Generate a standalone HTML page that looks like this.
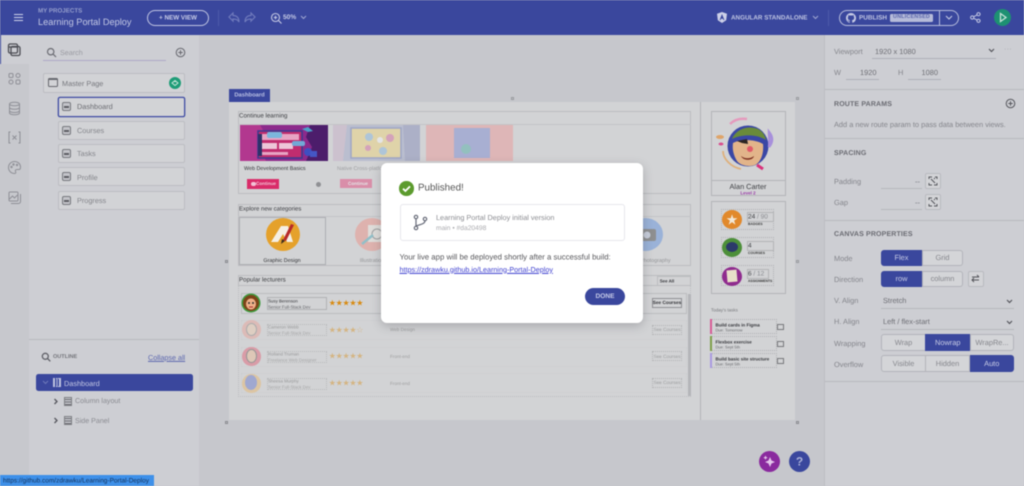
<!DOCTYPE html>
<html><head><meta charset="utf-8"><title>Learning Portal Deploy</title>
<style>
html,body{margin:0;padding:0;width:1024px;height:486px;overflow:hidden;background:#c6c7cc}
body{font-family:"Liberation Sans",sans-serif;position:relative;text-rendering:geometricPrecision}
#r{position:absolute;left:0;top:0;width:1024px;height:486px;overflow:hidden;filter:blur(.45px)}
.a{position:absolute;box-sizing:border-box}
.t{position:absolute;white-space:nowrap;line-height:1;transform:translateY(calc(-50% + .5px))}
.c{transform:translate(-50%,calc(-50% + .5px))}
.g{color:#75767c}
.h{font-weight:bold;font-size:7px;color:#6a6b72;letter-spacing:.15px}
.lb{font-size:7.400px;color:#84858b}
.ln{position:absolute;height:1px;background:#aeafb8}
.div{position:absolute;height:1px;background:#b8b9bf}
.nav{position:absolute;box-sizing:border-box;left:58px;width:127px;border:1px solid #bcbdc2;background:#d2d3d6;border-radius:2px}
.ni{position:absolute;left:62px;width:9px;height:9px;box-sizing:border-box;border:1px solid #77787e;border-radius:2px;background:#c3c4c9}
.ni:after{content:"";position:absolute;left:1px;right:1px;top:3px;height:2px;background:#5c5d63}
.navt{position:absolute;left:77px;font-size:7.300px;color:#6b6c72;white-space:nowrap;line-height:1;transform:translateY(calc(-50% + .5px))}
.sec{position:absolute;box-sizing:border-box;border:1px solid #bcbdc0}
.seg{position:absolute;box-sizing:border-box;border:1px solid #b3b4ba;background:#d4d5d8;text-align:center;font-size:7.400px;color:#85868c;display:flex;align-items:center;justify-content:center;white-space:nowrap}
.on{background:#3a479d;color:#c9cde6;border-color:#3a479d}
.rl{position:absolute;box-sizing:border-box;border:1px dotted #c3c4c7}
.fade{opacity:.42}
</style></head><body><div id="r">

<!-- base panels -->
<div class="a" style="left:0;top:35px;width:29px;height:451px;background:#c7c8cd"></div>
<div class="a" style="left:0;top:35px;width:29px;height:29px;background:#cdced3;border-left:1.5px solid #3a479d"></div>
<div class="a" style="left:29px;top:35px;width:170px;height:451px;background:#cdced3"></div>
<div class="a" style="left:199px;top:35px;width:625px;height:451px;background:#c6c7cc"></div>
<div class="a" style="left:824px;top:35px;width:200px;height:451px;background:#cdced3;border-left:1px solid #bdbec3"></div>

<!-- header -->
<div class="a" style="left:0;top:0;width:1024px;height:35px;background:#3a479d"></div>
<div class="a" style="left:14px;top:14px;width:9px;height:1.300px;background:#d0d3ea"></div>
<div class="a" style="left:14px;top:17px;width:9px;height:1.300px;background:#d0d3ea"></div>
<div class="a" style="left:14px;top:20px;width:9px;height:1.300px;background:#d0d3ea"></div>
<div class="t" style="left:38px;top:10.500px;font-size:6.200px;font-weight:bold;color:#969fcd">MY PROJECTS</div>
<div class="t" style="left:38px;top:22px;font-size:9.200px;color:#c4c9e5">Learning Portal Deploy</div>
<div class="a" style="left:147px;top:10px;width:62px;height:16px;border:1px solid #c0c5e2;border-radius:8px"></div>
<div class="t c" style="left:178px;top:17.500px;font-size:6.300px;font-weight:bold;color:#c9cde8">+ NEW VIEW</div>
<div class="a" style="left:218px;top:10px;width:1px;height:16px;background:#4d5aa9"></div>
<svg class="a" style="left:228px;top:12px" width="32" height="12" fill="none" stroke="#6f7abc" stroke-width="1.200"><path d="M5 1L1 5l4 4V7c3 0 5 .7 6 3 0-4-2-6.500-6-6.500z"/><path d="M23 1l4 4-4 4V7c-3 0-5 .7-6 3 0-4 2-6.500 6-6.500z"/></svg>
<svg class="a" style="left:270px;top:11px" width="13" height="14" fill="none" stroke="#c5c9e4" stroke-width="1.100"><circle cx="5.500" cy="6.500" r="4"/><path d="M8.500 9.500L11.500 12.500M5.500 4.800v3.400M3.800 6.500h3.400"/></svg>
<div class="t" style="left:283px;top:17.500px;font-size:6.600px;font-weight:bold;color:#c4c9e5">50%</div>
<svg class="a" style="left:300px;top:15px" width="7" height="5" fill="none" stroke="#9fa7d3" stroke-width="1"><path d="M1 1l2.500 2.500L6 1"/></svg>
<svg class="a" style="left:717px;top:12px" width="10" height="11"><path d="M5 0l5 1.800-.8 6.400L5 11 .8 8.200 0 1.800z" fill="#ccd0e8"/><path d="M5 2L2.600 8h1l.5-1.300h1.800L6.400 8h1z" fill="#3a479d"/></svg>
<div class="t" style="left:731px;top:17.500px;font-size:6.300px;font-weight:bold;color:#bcc2e0">ANGULAR STANDALONE</div>
<svg class="a" style="left:812px;top:15px" width="7" height="5" fill="none" stroke="#9fa7d3" stroke-width="1"><path d="M1 1l2.500 2.500L6 1"/></svg>
<div class="a" style="left:828px;top:10px;width:1px;height:16px;background:#4d5aa9"></div>
<div class="a" style="left:839px;top:10px;width:120px;height:16px;border:1px solid #b6bcdc;border-radius:8px"></div>
<div class="a" style="left:939px;top:10px;width:1px;height:16px;background:#b6bcdc"></div>
<svg class="a" style="left:846px;top:13px" width="10" height="10" viewBox="0 0 16 16"><path fill="#c8cce6" d="M8 0C3.580 0 0 3.580 0 8c0 3.540 2.290 6.530 5.470 7.590.4.070.55-.17.55-.38v-1.340c-2.230.48-2.700-1.070-2.700-1.070-.36-.92-.89-1.170-.89-1.170-.73-.5.050-.49.050-.49.800.06 1.230.830 1.230.830.710 1.220 1.870.870 2.330.660.070-.520.280-.870.510-1.070-1.780-.2-3.640-.89-3.640-3.950 0-.870.310-1.590.820-2.150-.080-.2-.360-1.020.080-2.120 0 0 .670-.210 2.200.820a7.600 7.600 0 0 1 4 0c1.530-1.040 2.200-.820 2.200-.820.440 1.100.160 1.920.080 2.120.510.560.820 1.270.820 2.150 0 3.070-1.870 3.750-3.650 3.950.290.250.540.730.540 1.480v2.200c0 .210.150.460.550.380A8 8 0 0 0 16 8c0-4.420-3.580-8-8-8z"/></svg>
<div class="t" style="left:859px;top:17.500px;font-size:6.400px;font-weight:bold;color:#bfc4e2">PUBLISH</div>
<div class="a" style="left:890px;top:13.500px;width:43px;height:8px;background:#b6bbd9;border-radius:1.500px"></div>
<div class="t c" style="left:911.500px;top:17.200px;font-size:5.400px;font-weight:bold;color:#5d68ad;letter-spacing:.2px">UNLICENSED</div>
<svg class="a" style="left:945px;top:15px" width="8" height="6" fill="none" stroke="#c5c9e4" stroke-width="1.100"><path d="M1 1l3 3 3-3"/></svg>
<svg class="a" style="left:970px;top:12px" width="11" height="11" fill="none" stroke="#c5c9e4" stroke-width="1"><circle cx="8.500" cy="2.200" r="1.600"/><circle cx="8.500" cy="8.800" r="1.600"/><circle cx="2.200" cy="5.500" r="1.600"/><path d="M3.700 4.700l3.400-1.800M3.700 6.300l3.400 1.800"/></svg>
<div class="a" style="left:994px;top:9px;width:17px;height:17px;border-radius:50%;background:#1d9172"></div>
<svg class="a" style="left:998px;top:12px" width="10" height="11" fill="none" stroke="#c6e3d8" stroke-width="1.300"><path d="M2.500 1.500v8L8 5.500z"/></svg>

<!-- rail icons -->
<svg class="a" style="left:7px;top:42px" width="15" height="15" fill="none" stroke="#4c4d54" stroke-width="1.300"><rect x="1.500" y="2" width="9" height="9" rx="1.500"/><rect x="4" y="4.500" width="9" height="9" rx="1.500"/><path d="M1.500 5h9"/></svg>
<svg class="a" style="left:7px;top:71px" width="15" height="15" fill="none" stroke="#8f9097" stroke-width="1"><rect x="2" y="2.500" width="4" height="4" rx="1"/><circle cx="11" cy="4.500" r="2"/><circle cx="4" cy="11" r="2"/><rect x="9" y="9" width="4" height="4" rx="1"/></svg>
<svg class="a" style="left:7px;top:101px" width="15" height="15" fill="none" stroke="#8f9097" stroke-width="1"><ellipse cx="7.500" cy="3" rx="5" ry="1.800"/><path d="M2.500 3v9c0 1 2.200 1.800 5 1.800s5-.8 5-1.800V3M2.500 6.500c0 1 2.200 1.800 5 1.800s5-.8 5-1.800M2.500 9.700c0 1 2.200 1.800 5 1.800s5-.8 5-1.800"/></svg>
<svg class="a" style="left:7px;top:130px" width="15" height="15" fill="none" stroke="#8f9097" stroke-width="1"><path d="M3.500 2H2v11h1.500M11.500 2H13v11h-1.500M5.500 5.500l4 4M9.500 5.500l-4 4"/></svg>
<svg class="a" style="left:7px;top:160px" width="15" height="15" fill="none" stroke="#8f9097" stroke-width="1"><path d="M7.500 1.500a6 6 0 1 0 0 12c1.500 0 1.500-1 1-2s0-2 1.500-2h2c1 0 1.500-1 1.500-2.500 0-3-2.500-5.500-6-5.500z"/><circle cx="4.500" cy="7" r=".7"/><circle cx="6.500" cy="4.500" r=".7"/><circle cx="10" cy="5" r=".7"/></svg>
<svg class="a" style="left:7px;top:190px" width="15" height="15" fill="none" stroke="#8f9097" stroke-width="1"><rect x="2" y="2" width="9" height="9" rx="1"/><path d="M4 13.500h7.500a2 2 0 0 0 2-2V4M2.500 9l3-3 2 2 3-3"/></svg>

<!-- left panel -->
<svg class="a" style="left:46px;top:47px" width="11" height="11" fill="none" stroke="#6a6b72" stroke-width="1.200"><circle cx="4.700" cy="4.700" r="3.200"/><path d="M7 7l3 3"/></svg>
<div class="t" style="left:60px;top:52px;font-size:7.200px;color:#9a9ba2">Search</div>
<div class="ln" style="left:43px;top:60px;width:123px;background:#aea9c7"></div>
<svg class="a" style="left:175px;top:47px" width="11" height="11" fill="none" stroke="#66676e" stroke-width="1"><circle cx="5.500" cy="5.500" r="4.300"/><path d="M5.500 3.300v4.400M3.300 5.500h4.400"/></svg>

<div class="nav" style="left:43px;width:142px;top:73px;height:19.500px"></div>
<div class="a" style="left:48px;top:78px;width:10px;height:9px;border:1.200px solid #66676e;border-top-width:2.200px;border-radius:1.500px"></div>
<div class="navt" style="left:62px;top:82.500px;color:#77787e">Master Page</div>
<div class="a" style="left:169px;top:76.500px;width:12px;height:12px;border-radius:50%;background:#1f9d78"></div>
<svg class="a" style="left:171px;top:78.500px" width="8" height="8" fill="none" stroke="#c9e6da" stroke-width="1"><path d="M1 4l3-2.500L7 4 4 6.500zM2.500 2.500h3"/></svg>

<div class="nav" style="top:96.500px;height:20px;border:1px solid #3f4ca3;box-shadow:0 0 0 .3px #3f4ca3"></div>
<div class="ni" style="top:101.500px"></div><div class="navt" style="top:106px">Dashboard</div>
<div class="nav" style="top:120.500px;height:19px"></div>
<div class="ni" style="top:125.500px"></div><div class="navt" style="top:130px;color:#84858b">Courses</div>
<div class="nav" style="top:143.500px;height:19.500px"></div>
<div class="ni" style="top:149px"></div><div class="navt" style="top:153px;color:#84858b">Tasks</div>
<div class="nav" style="top:167px;height:19px"></div>
<div class="ni" style="top:172px"></div><div class="navt" style="top:176.500px;color:#84858b">Profile</div>
<div class="nav" style="top:190.500px;height:19px"></div>
<div class="ni" style="top:195.500px"></div><div class="navt" style="top:200px;color:#84858b">Progress</div>

<div class="div" style="left:29px;top:339px;width:170px"></div>
<svg class="a" style="left:41px;top:352px" width="10" height="10" fill="none" stroke="#606168" stroke-width="1.300"><circle cx="4.300" cy="4.300" r="3"/><path d="M6.500 6.500l2.800 2.800"/></svg>
<div class="t" style="left:53px;top:356.500px;font-size:5.500px;font-weight:bold;color:#74757b">OUTLINE</div>
<div class="t" style="left:148px;top:356.500px;font-size:7.200px;color:#5c67ae;text-decoration:underline">Collapse all</div>
<div class="a" style="left:36px;top:374px;width:157px;height:17px;background:#3a479d;border-radius:2.500px"></div>
<svg class="a" style="left:42px;top:380px" width="7" height="5" fill="none" stroke="#6e79ba" stroke-width="1"><path d="M1 1l2.500 2.500L6 1"/></svg>
<div class="a" style="left:53px;top:378px;width:8px;height:9px;border:1px dotted #bcc1df;background:repeating-linear-gradient(90deg,#bcc1df 0 1px,#3a479d 1px 2.500px)"></div>
<div class="t" style="left:64px;top:382.500px;font-size:7.300px;color:#c4c8e4">Dashboard</div>
<svg class="a" style="left:53px;top:398px" width="6" height="7" fill="none" stroke="#55565d" stroke-width="1.300"><path d="M1.500 1l2.500 2.500L1.500 6"/></svg>
<div class="a" style="left:64px;top:397px;width:8px;height:9px;border:1px solid #7e7f85;background:repeating-linear-gradient(0deg,#6c6d73 0 1px,#c3c4c9 1px 2.500px)"></div>
<div class="t" style="left:75px;top:401px;font-size:7.100px;color:#8a8b91">Column layout</div>
<svg class="a" style="left:53px;top:417px" width="6" height="7" fill="none" stroke="#55565d" stroke-width="1.300"><path d="M1.500 1l2.500 2.500L1.500 6"/></svg>
<div class="a" style="left:64px;top:416px;width:8px;height:9px;border:1px solid #7e7f85;background:repeating-linear-gradient(0deg,#6c6d73 0 1px,#c3c4c9 1px 2.500px)"></div>
<div class="t" style="left:75px;top:420.500px;font-size:7.100px;color:#8a8b91">Side Panel</div>

<!-- artboard -->
<div class="a" style="left:229px;top:89px;width:41px;height:13px;background:#3a479d"></div>
<div class="t c" style="left:249.500px;top:95.500px;font-size:5.800px;font-weight:bold;color:#b9c0e4">Dashboard</div>
<div class="a" style="left:229px;top:102px;width:566px;height:318px;background:#d2d3d5"></div>
<div class="a" style="left:700px;top:102px;width:1px;height:318px;background:#b4b5b8"></div>
<div class="a" style="left:510.500px;top:97px;width:3px;height:3px;border:.7px solid #9a9ba0"></div>
<div class="a" style="left:796px;top:97px;width:3px;height:3px;border:.7px solid #9a9ba0"></div>
<div class="a" style="left:225px;top:259.500px;width:3px;height:3px;border:.7px solid #8a8b90"></div>
<div class="a" style="left:796px;top:259.500px;width:3px;height:3px;border:.7px solid #9a9ba0"></div>
<div class="a" style="left:225px;top:421px;width:3px;height:3px;border:.7px solid #8a8b90"></div>
<div class="a" style="left:796px;top:421px;width:3px;height:3px;border:.7px solid #8a8b90"></div>

<!-- continue learning -->
<div class="sec" style="left:238px;top:111px;width:453px;height:83px"></div>
<div class="a" style="left:238px;top:124px;width:453px;height:1px;background:#c3c4c7"></div>
<div class="t" style="left:239px;top:115.500px;font-size:6.200px;color:#3d3e42">Continue learning</div>
<svg class="a" style="left:240px;top:125px" width="88" height="36">
<rect width="88" height="36" fill="#8d2a8b"/><path d="M0 0h20l6 10-6 12 6 14H0z" fill="#b2388f"/><path d="M70 0h18v36H66l6-14-6-10z" fill="#4c1d6b"/>
<rect x="18" y="6" width="44" height="27" fill="#c02d6f" stroke="#3b3a8f" stroke-width="1.500"/><rect x="21" y="9" width="38" height="6" fill="#e7a4c4"/><rect x="21" y="18" width="16" height="6" fill="#edc6d8"/><rect x="39" y="18" width="14" height="6" fill="#edc6d8"/><rect x="22" y="27" width="26" height="3" fill="#e7a4c4"/>
<rect x="27" y="7" width="15" height="6" rx="2" fill="#7bb7dc"/><rect x="52" y="16" width="13" height="5" rx="2" fill="#72a9d6"/><circle cx="68" cy="27" r="4" fill="#3e4fc1"/><rect x="70" y="26" width="7" height="6" fill="#4556c5"/><path d="M18 9h4v22h-4z" fill="#2e3168"/><path d="M62 4l6-2 5 4-5 1z" fill="#4ca2c9"/></svg>
<div class="fade">
<svg class="a" style="left:333px;top:125px" width="87" height="36"><rect width="87" height="36" fill="#9aa3c9"/><path d="M0 0h14l-4 36H0z" fill="#c4a9c6"/><path d="M70 0h17v36H72z" fill="#7a82b5"/><rect x="18" y="3" width="50" height="30" fill="#f1d56f" stroke="#5a6ab2" stroke-width="1.500"/><circle cx="36" cy="12" r="4" fill="#7db4dd"/><circle cx="57" cy="13" r="4" fill="#d75f97"/><circle cx="47" cy="15" r="3" fill="#fff"/><circle cx="35" cy="23" r="3" fill="#d75f97"/><circle cx="50" cy="26" r="4" fill="#7db4dd"/></svg>
<svg class="a" style="left:426px;top:125px" width="87" height="36"><rect width="87" height="36" fill="#ef8f8f"/><rect x="28" y="3" width="36" height="30" fill="#6f7fcf"/><circle cx="40" cy="24" r="5" fill="#3fa6a0"/></svg>
<div class="t" style="left:337px;top:169px;font-size:5.300px;color:#56575b">Native Cross-platform</div>
<div class="a" style="left:340px;top:179px;width:32px;height:9px;background:#e4306f"></div>
<div class="t c" style="left:358px;top:183.500px;font-size:4.600px;font-weight:bold;color:#fff">Continue</div>
</div>
<div class="t" style="left:244px;top:169px;font-size:5.400px;color:#333438">Web Development Basics</div>
<div class="a" style="left:247px;top:179px;width:32px;height:9.500px;background:#d92c69"></div>
<div class="a" style="left:251px;top:181.500px;width:4.500px;height:4.500px;border-radius:50%;background:#f3c3d6"></div>
<div class="t c" style="left:266px;top:183.800px;font-size:4.600px;font-weight:bold;color:#f3c3d6">Continue</div>
<div class="a" style="left:316px;top:182px;width:5px;height:5px;border-radius:50%;background:#8f9094"></div>

<!-- explore -->
<div class="sec" style="left:238px;top:204px;width:453px;height:62px"></div>
<div class="a" style="left:238px;top:216px;width:453px;height:1px;background:#c3c4c7"></div>
<div class="t" style="left:239px;top:208.500px;font-size:6px;color:#3d3e42">Explore new categories</div>
<div class="a" style="left:239px;top:217px;width:87px;height:48px;border:1px solid #adaeb2"></div>
<div class="a" style="left:265.500px;top:218px;width:34px;height:33px;border-radius:50%;background:#e5a12b"></div>
<svg class="a" style="left:265px;top:218px" width="36" height="34"><path d="M6 24L16 8h7l5 16H22l-4-8-5 8z" fill="#f5efe4"/><path d="M26 6l-8 16 3 1 8-16z" fill="#b72a2a"/><path d="M17 21l-1 5 4-3z" fill="#40301f"/></svg>
<div class="t c" style="left:282px;top:261px;font-size:5.400px;color:#2f3034">Graphic Design</div>
<div class="fade">
<div class="a" style="left:355px;top:218px;width:34px;height:33px;border-radius:50%;background:#f0867a"></div>
<svg class="a" style="left:355px;top:218px" width="34" height="33"><rect x="13" y="7" width="13" height="17" fill="#f3ece2"/><circle cx="22" cy="16" r="5" fill="none" stroke="#5b5b5b"/><path d="M7 26l11-9" stroke="#3aa5b7" stroke-width="2.500"/></svg>
<div class="t c" style="left:372px;top:261px;font-size:5.400px;color:#3d3e42">Illustration</div>
<div class="a" style="left:628px;top:217.500px;width:35px;height:33px;border-radius:50%;background:#4f86dd"></div>
<svg class="a" style="left:636px;top:225px" width="24" height="18"><rect x="2" y="4" width="18" height="12" rx="2" fill="#333"/><circle cx="11" cy="10" r="3.500" fill="#b8c7e2"/></svg>
<div class="t" style="left:640px;top:261px;font-size:5.400px;color:#3d3e42">Photography</div>
</div>

<!-- lecturers -->
<div class="sec" style="left:238px;top:275px;width:453px;height:122px;border-style:dotted"></div>
<div class="a" style="left:238px;top:275px;width:453px;height:11px;border:1px solid #bcbdc0"></div>
<div class="t" style="left:239px;top:280px;font-size:6.200px;color:#3d3e42">Popular lecturers</div>
<div class="a" style="left:657px;top:276px;width:34px;height:10px;border:1px solid #bcbdc0"></div>
<div class="t c" style="left:667px;top:280.500px;font-size:4.400px;font-weight:bold;color:#3a3b3f">See All</div>

<div class="a" style="left:241px;top:293px;width:446px;height:20.500px;border:1px solid #bbbcbf"></div>
<svg class="a" style="left:241px;top:293px" width="20" height="20"><circle cx="10" cy="10" r="9.500" fill="#3f9a3d"/><circle cx="10" cy="10" r="8" fill="#7c4319"/><ellipse cx="10" cy="11" rx="5" ry="5.500" fill="#efb089"/><circle cx="8" cy="10" r="1" fill="#333"/><circle cx="12" cy="10" r="1" fill="#333"/><path d="M8 14h4" stroke="#a33"/></svg>
<div class="a" style="left:267px;top:297px;width:60px;height:12.500px;border:1px solid #b1b2b5"></div>
<div class="t" style="left:268px;top:300.500px;font-size:4.400px;color:#38393d">Susy Berenson</div>
<div class="t" style="left:268px;top:306.500px;font-size:4.400px;color:#66676b">Senior Full-Stack Dev</div>
<div class="t" style="left:328.800px;top:302.800px;font-size:8px;letter-spacing:-.3px;color:#d88a10;font-family:'DejaVu Sans',sans-serif">★★★★★</div>
<div class="a" style="left:652px;top:298px;width:30px;height:10px;border:1px solid #8f9094"></div>
<div class="t c" style="left:667px;top:303px;font-size:4.700px;color:#333438;font-weight:bold">See Courses</div>

<div class="fade">
<div class="rl" style="left:241px;top:320px;width:446px;height:20px"></div>
<div class="a" style="left:242px;top:320px;width:18.500px;height:18.500px;border-radius:50%;background:#eb9c8f"></div><div class="a" style="left:246px;top:323px;width:11px;height:13px;border-radius:50%;background:#f0c9a9;border:1px solid #777"></div>
<div class="rl" style="left:267px;top:324px;width:60px;height:12px;border-color:#999"></div>
<div class="t" style="left:268px;top:327px;font-size:4.400px;color:#444">Cameron Webb</div>
<div class="t" style="left:268px;top:332.500px;font-size:4.400px;color:#666">Senior Full-Stack Dev</div>
<div class="t" style="left:328.800px;top:329.500px;font-size:8px;letter-spacing:-.3px;color:#d88a10;font-family:'DejaVu Sans',sans-serif">★★★★☆</div>
<div class="t" style="left:390px;top:330px;font-size:4.600px;color:#555">Web Design</div>
<div class="rl" style="left:652px;top:325px;width:30px;height:10px;border-color:#888"></div>
<div class="t c" style="left:667px;top:330px;font-size:4.700px;color:#555">See Courses</div>

<div class="rl" style="left:241px;top:347px;width:446px;height:20px"></div>
<div class="a" style="left:242px;top:347px;width:18.500px;height:18.500px;border-radius:50%;background:#e4526a"></div><div class="a" style="left:246px;top:349px;width:11px;height:14px;border-radius:50%;background:#efb78e;border:1px solid #444"></div>
<div class="rl" style="left:267px;top:351px;width:60px;height:12px;border-color:#999"></div>
<div class="t" style="left:268px;top:353.500px;font-size:4.400px;color:#444">Rolland Truman</div>
<div class="t" style="left:268px;top:359.500px;font-size:4.400px;color:#666">Freelance Web Designer</div>
<div class="t" style="left:328.800px;top:356px;font-size:8px;letter-spacing:-.3px;color:#d88a10;font-family:'DejaVu Sans',sans-serif">★★★★★</div>
<div class="t" style="left:390px;top:356.500px;font-size:4.600px;color:#555">Front-end</div>
<div class="rl" style="left:652px;top:351px;width:30px;height:10px;border-color:#888"></div>
<div class="t c" style="left:667px;top:356.500px;font-size:4.700px;color:#555">See Courses</div>

<div class="rl" style="left:241px;top:373px;width:446px;height:20px"></div>
<div class="a" style="left:242px;top:374px;width:18.500px;height:18.500px;border-radius:50%;background:#ecb35f"></div><div class="a" style="left:245px;top:375px;width:12px;height:15px;border-radius:50%;background:#5c6ecb"></div>
<div class="rl" style="left:267px;top:378px;width:60px;height:12px;border-color:#999"></div>
<div class="t" style="left:268px;top:380.500px;font-size:4.400px;color:#444">Sheesa Murphy</div>
<div class="t" style="left:268px;top:386.500px;font-size:4.400px;color:#666">Senior Full-Stack Dev</div>
<div class="t" style="left:328.800px;top:383px;font-size:8px;letter-spacing:-.3px;color:#d88a10;font-family:'DejaVu Sans',sans-serif">★★★★★</div>
<div class="t" style="left:390px;top:383.500px;font-size:4.600px;color:#555">Front-end</div>
<div class="rl" style="left:652px;top:378px;width:30px;height:10px;border-color:#888"></div>
<div class="t c" style="left:667px;top:383px;font-size:4.700px;color:#555">See Courses</div>
</div>
<div class="a" style="left:688px;top:294px;width:2.500px;height:102px;background:#b4b5b9"></div>

<!-- right profile -->
<div class="sec" style="left:711px;top:111px;width:75px;height:85px;border-color:#b4b5b8"></div>
<div class="a" style="left:711px;top:180px;width:75px;height:1px;background:#b4b5b8"></div>
<svg class="a" style="left:712px;top:112px" width="73" height="68" fill="none"><g transform="translate(0,3)">
<circle cx="36" cy="31" r="20.500" fill="#3a47a5"/>
<path d="M20 24c4-10 16-14 26-10 4 2 7 6 8 11-9-6-24-6-34-1z" fill="#6a8b3a"/>
<path d="M21 28c7-4 22-4 30 1 1 9-2 18-8 21-6 2-14 1-18-4-3-5-5-11-4-18z" fill="#e2b48a"/>
<path d="M25 26l10-2 1 5-6-1z" fill="#2b2522"/>
<circle cx="38" cy="34" r="3" fill="#e15a6a"/>
<path d="M29 41c4 3 9 3 13 0-1 5-11 5-13 0z" fill="#7c2f20"/>
<path d="M18 9c4-4 10-6 17-5" stroke="#e59abd" stroke-width="2.500"/>
<path d="M57 17c4 5 4 10 0 15 1-5 0-10 0-15z" stroke="#a78fdb" stroke-width="2.500"/>
<ellipse cx="8" cy="22" rx="4" ry="2" fill="#dfa469"/><ellipse cx="9" cy="29" rx="2.500" ry="1.500" fill="#d94f8f"/>
<path d="M11 36c0 8 8 16 18 18" stroke="#deb07c" stroke-width="1.800"/>
<path d="M45 50l6 4" stroke="#d9327b" stroke-width="3"/></g></svg>
<div class="t c" style="left:748px;top:185.500px;font-size:7.300px;color:#3f4044">Alan Carter</div>
<div class="t c" style="left:748px;top:193px;font-size:4.500px;color:#9a3ba8;font-weight:bold">Level 2</div>

<div class="sec" style="left:711px;top:201px;width:75px;height:93px;border-color:#b4b5b8"></div>
<div class="rl" style="left:721px;top:209px;width:53px;height:21px;border-color:#b0b1b4"></div>
<div class="a" style="left:722px;top:210px;width:20px;height:19px;border-radius:50%;background:#e1892c"></div>
<div class="t c" style="left:732px;top:219.500px;font-size:14px;color:#f2e8d8;font-family:'DejaVu Sans',sans-serif">★</div>
<div class="t" style="left:748px;top:217px;font-size:6.500px;color:#3f4044">24 <span style="color:#8a8b90">/ 90</span></div>
<div class="t" style="left:748px;top:224px;font-size:3.300px;font-weight:bold;color:#333;letter-spacing:.1px">BADGES</div>
<div class="a" style="left:747px;top:212px;width:27px;height:10px;border:1px solid #b3b4b7"></div>
<div class="rl" style="left:721px;top:237px;width:53px;height:21px;border-color:#b0b1b4"></div>
<div class="a" style="left:722px;top:238px;width:20px;height:19px;border-radius:50%;background:#4d8f3a"></div>
<div class="a" style="left:726px;top:242px;width:12px;height:10px;border-radius:50%;background:#2c3a6a"></div>
<div class="t" style="left:748px;top:245.500px;font-size:6.500px;color:#3f4044">4</div>
<div class="t" style="left:748px;top:252.500px;font-size:3.300px;font-weight:bold;color:#333;letter-spacing:.1px">COURSES</div>
<div class="a" style="left:747px;top:241px;width:27px;height:10px;border:1px solid #b3b4b7"></div>
<div class="rl" style="left:721px;top:265px;width:53px;height:21px;border-color:#b0b1b4"></div>
<div class="a" style="left:722px;top:266.500px;width:20px;height:19px;border-radius:50%;background:#8f2b8e"></div>
<div class="a" style="left:727px;top:270px;width:10px;height:12px;background:#e8dfc9;transform:rotate(-5deg)"></div>
<div class="t" style="left:748px;top:274px;font-size:6.500px;color:#3f4044">6 <span style="color:#8a8b90">/ 12</span></div>
<div class="t" style="left:748px;top:280.500px;font-size:3.300px;font-weight:bold;color:#333">ASSIGNMENTS</div>
<div class="a" style="left:747px;top:269px;width:22px;height:10px;border:1px solid #b3b4b7"></div>

<div class="t" style="left:711px;top:309.500px;font-size:4.500px;color:#77787c">Today's tasks</div>
<div class="rl" style="left:710px;top:319px;width:67px;height:15px;border-color:#b0b1b4"></div><div class="a" style="left:710px;top:319px;width:2px;height:15px;background:#d65c96"></div>
<div class="rl" style="left:710px;top:336px;width:67px;height:15px;border-color:#b0b1b4"></div><div class="a" style="left:710px;top:336px;width:2px;height:15px;background:#7ea04a"></div>
<div class="rl" style="left:710px;top:353px;width:67px;height:15px;border-color:#b0b1b4"></div><div class="a" style="left:710px;top:353px;width:2px;height:15px;background:#a99ae0"></div>
<div class="t" style="left:715.500px;top:324.500px;font-size:4.500px;font-weight:bold;color:#34353a">Build cards in Figma</div>
<div class="t" style="left:715.500px;top:329.500px;font-size:4px;color:#66676b">Due: Tomorrow</div>
<div class="t" style="left:715.500px;top:341.500px;font-size:4.500px;font-weight:bold;color:#34353a">Flexbox exercise</div>
<div class="t" style="left:715.500px;top:346.500px;font-size:4px;color:#66676b">Due: Sept 5th</div>
<div class="t" style="left:715.500px;top:358.500px;font-size:4.500px;font-weight:bold;color:#34353a">Build basic site structure</div>
<div class="t" style="left:715.500px;top:363.500px;font-size:4px;color:#66676b">Due: Sept 5th</div>
<div class="a" style="left:777px;top:323.500px;width:6.500px;height:6.500px;border:1px solid #77787c"></div>
<div class="a" style="left:777px;top:340.500px;width:6.500px;height:6.500px;border:1px solid #77787c"></div>
<div class="a" style="left:777px;top:357.500px;width:6.500px;height:6.500px;border:1px solid #77787c"></div>

<!-- FABs -->
<div class="a" style="left:759px;top:451px;width:21px;height:21px;border-radius:50%;background:#8a2a9e"></div>
<svg class="a" style="left:762px;top:454px" width="15" height="15" fill="#e5c8ec"><path d="M8 3l1.500 3.500L13 8l-3.500 1.500L8 13 6.500 9.500 3 8l3.500-1.500z"/><path d="M3.500 1.500l.7 1.500 1.500.7-1.500.7-.7 1.500-.7-1.500L1.300 3.700l1.500-.7z"/></svg>
<div class="a" style="left:789px;top:451px;width:21px;height:21px;border-radius:50%;background:#3a479d"></div>
<div class="t c" style="left:799.500px;top:461px;font-size:12px;font-weight:bold;color:#a9b0d8">?</div>

<!-- right panel content -->
<div class="t lb" style="left:834px;top:50.500px">Viewport</div>
<div class="t" style="left:875px;top:50.500px;font-size:7.400px;color:#6d6e74">1920 x 1080</div>
<div class="ln" style="left:872px;top:58px;width:124px"></div>
<svg class="a" style="left:988px;top:48px" width="7" height="5" fill="none" stroke="#55565c" stroke-width="1.200"><path d="M1 1l2.500 2.500L6 1"/></svg>
<div class="t" style="left:1004px;top:49px;font-size:7px;color:#a3a4aa;letter-spacing:.3px">···</div>
<div class="t lb" style="left:834px;top:71.500px">W</div>
<div class="t" style="left:860px;top:71.500px;font-size:7.400px;color:#6d6e74">1920</div>
<div class="ln" style="left:846px;top:79px;width:33px"></div>
<div class="t lb" style="left:898px;top:71.500px">H</div>
<div class="t" style="left:921.500px;top:71.500px;font-size:7.400px;color:#6d6e74">1080</div>
<div class="ln" style="left:908px;top:79px;width:33px"></div>
<div class="div" style="left:825px;top:89px;width:199px"></div>
<div class="t h" style="left:834px;top:103.500px">ROUTE PARAMS</div>
<svg class="a" style="left:1005px;top:98px" width="11" height="11" fill="none" stroke="#55565c" stroke-width="1"><circle cx="5.500" cy="5.500" r="4.300"/><path d="M5.500 3.300v4.400M3.300 5.500h4.400"/></svg>
<div class="t lb" style="left:834px;top:123.500px">Add a new route param to pass data between views.</div>
<div class="div" style="left:825px;top:138px;width:199px"></div>
<div class="t h" style="left:834px;top:152.500px">SPACING</div>
<div class="t lb" style="left:834px;top:181px">Padding</div>
<div class="t" style="left:915px;top:181px;font-size:7.500px;color:#77787e">--</div>
<div class="ln" style="left:881px;top:188px;width:41px;background:#b7b8bd"></div>
<div class="a" style="left:925px;top:173px;width:16px;height:16px;border:1px solid #b9bac0;background:#d3d4d7;border-radius:2px"></div>
<svg class="a" style="left:928px;top:176px" width="10" height="10" fill="none" stroke="#55565c" stroke-width="1"><path d="M1 3V1h3M9 3V1H7M1 7v2h3M9 7v2H6M3 3l4 4M6 3l1-1"/></svg>
<div class="t lb" style="left:834px;top:202px">Gap</div>
<div class="t" style="left:915px;top:202px;font-size:7.500px;color:#77787e">--</div>
<div class="ln" style="left:881px;top:209px;width:41px;background:#b7b8bd"></div>
<div class="a" style="left:925px;top:194px;width:16px;height:16px;border:1px solid #b9bac0;background:#d3d4d7;border-radius:2px"></div>
<svg class="a" style="left:928px;top:197px" width="10" height="10" fill="none" stroke="#55565c" stroke-width="1"><path d="M1 3V1h3M9 3V1H7M1 7v2h3M9 7v2H6M3 3l4 4M6 3l1-1"/></svg>
<div class="div" style="left:825px;top:220px;width:199px"></div>
<div class="t h" style="left:834px;top:233.500px">CANVAS PROPERTIES</div>

<div class="t lb" style="left:834px;top:257.500px">Mode</div>
<div class="seg on" style="left:881px;top:249.500px;width:41px;height:16.500px;border-radius:3px 0 0 3px">Flex</div>
<div class="seg" style="left:922px;top:249.500px;width:41px;height:16.500px;border-radius:0 3px 3px 0">Grid</div>
<div class="t lb" style="left:834px;top:278.500px">Direction</div>
<div class="seg on" style="left:881px;top:270.500px;width:41px;height:16.500px;border-radius:3px 0 0 3px">row</div>
<div class="seg" style="left:922px;top:270.500px;width:41px;height:16.500px;border-radius:0 3px 3px 0">column</div>
<div class="a" style="left:967.500px;top:270.500px;width:16px;height:16px;border:1px solid #b9bac0;background:#d3d4d7;border-radius:2px"></div>
<svg class="a" style="left:971px;top:274px" width="9" height="9" fill="none" stroke="#55565c" stroke-width="1"><path d="M1 3h7M6 1l2 2M8 6H1M3 4L1 6l2 2"/></svg>
<div class="t lb" style="left:834px;top:300px">V. Align</div>
<div class="t" style="left:883px;top:299.500px;font-size:7.400px;color:#6d6e74">Stretch</div>
<div class="ln" style="left:881px;top:308px;width:133px;background:#b7b8bd"></div>
<svg class="a" style="left:1006px;top:298.500px" width="7" height="5" fill="none" stroke="#55565c" stroke-width="1.200"><path d="M1 1l2.500 2.500L6 1"/></svg>
<div class="t lb" style="left:834px;top:321px">H. Align</div>
<div class="t" style="left:883px;top:321px;font-size:7.400px;color:#6d6e74">Left / flex-start</div>
<div class="ln" style="left:881px;top:329px;width:133px;background:#b7b8bd"></div>
<svg class="a" style="left:1006px;top:319.500px" width="7" height="5" fill="none" stroke="#55565c" stroke-width="1.200"><path d="M1 1l2.500 2.500L6 1"/></svg>
<div class="t lb" style="left:834px;top:342.500px">Wrapping</div>
<div class="seg" style="left:881px;top:334px;width:45px;height:17px;border-radius:3px 0 0 3px">Wrap</div>
<div class="seg on" style="left:925px;top:334px;width:45.500px;height:17px">Nowrap</div>
<div class="seg" style="left:970px;top:334px;width:44px;height:17px;border-radius:0 3px 3px 0">WrapRe...</div>
<div class="t lb" style="left:834px;top:363.500px">Overflow</div>
<div class="seg" style="left:881px;top:355px;width:45px;height:17px;border-radius:3px 0 0 3px">Visible</div>
<div class="seg" style="left:925px;top:355px;width:45px;height:17px">Hidden</div>
<div class="seg on" style="left:969.500px;top:355px;width:44.500px;height:17px;border-radius:0 3px 3px 0">Auto</div>
<div class="div" style="left:825px;top:381px;width:199px"></div>

<!-- modal -->
<div class="a" style="left:381px;top:163px;width:262px;height:160px;background:#fff;border-radius:6px;box-shadow:0 3px 10px rgba(60,60,70,.28)"></div>
<div class="a" style="left:399px;top:181px;width:14.500px;height:14.500px;border-radius:50%;background:#5c9b2e"></div>
<svg class="a" style="left:399px;top:181px" width="15" height="15" fill="none" stroke="#fff" stroke-width="1.800"><path d="M4 7.700l2.400 2.300 4.600-4.600"/></svg>
<div class="t" style="left:418px;top:188px;font-size:9.800px;color:#555">Published!</div>
<div class="a" style="left:399.500px;top:204px;width:225px;height:37px;border:1px solid #e7e7ec;border-radius:3px"></div>
<svg class="a" style="left:412px;top:214px" width="16" height="17" fill="none" stroke="#666a78" stroke-width="1.200"><circle cx="4" cy="3" r="1.700"/><circle cx="4" cy="14" r="1.700"/><circle cx="13" cy="5" r="1.700"/><path d="M4 4.700v7.600M13 6.700c0 3-4 3.500-9 5.300"/></svg>
<div class="t" style="left:436px;top:216.500px;font-size:7.300px;color:#8c8d92">Learning Portal Deploy initial version</div>
<div class="t" style="left:436px;top:228.500px;font-size:6.700px;color:#ababaf">main • #da20498</div>
<div class="t" style="left:399.500px;top:256.500px;font-size:7.800px;color:#58585c">Your live app will be deployed shortly after a successful build:</div>
<div class="t" style="left:399.500px;top:268.500px;font-size:7.200px;color:#3d3fcf;text-decoration:underline">https://zdrawku.github.io/Learning-Portal-Deploy</div>
<div class="a" style="left:585px;top:288px;width:40px;height:17px;background:#3a479d;border-radius:9px"></div>
<div class="t c" style="left:605px;top:296.500px;font-size:6.600px;font-weight:bold;color:#c6cbe8">DONE</div>

<!-- status bar -->
<div class="a" style="left:0;top:475px;width:153.500px;height:11px;background:#3e90e9"></div>
<div class="t" style="left:3px;top:481px;font-size:6.500px;color:#14325a">https://github.com/zdrawku/Learning-Portal-Deploy</div>

</div></body></html>
